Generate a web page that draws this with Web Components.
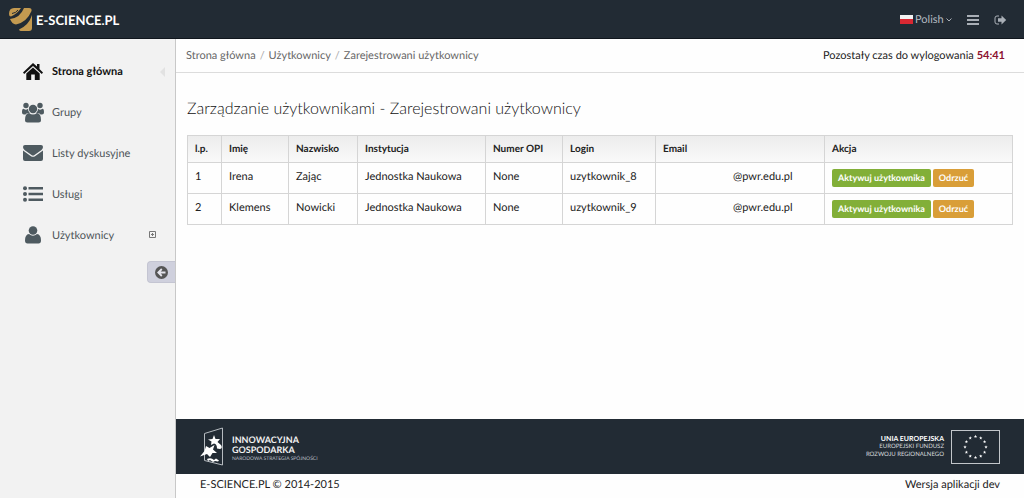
<!DOCTYPE html>
<html lang="pl">
<head>
<meta charset="utf-8">
<meta name="viewport" content="width=device-width, initial-scale=1">
<title>E-SCIENCE.PL – Zarejestrowani użytkownicy</title>
<style>
  body { margin: 0; font: 11px/16px Lato, "Open Sans", sans-serif; color: #222; background: #fefefe; text-rendering: geometricPrecision; }
</style>
</head>
<body>
<es-app>
  <es-topbar slot="top"></es-topbar>
  <es-sidebar slot="side">
    <es-nav-item icon="home" current>Strona główna</es-nav-item>
    <es-nav-item icon="group">Grupy</es-nav-item>
    <es-nav-item icon="mail">Listy dyskusyjne</es-nav-item>
    <es-nav-item icon="list">Usługi</es-nav-item>
    <es-nav-item icon="user" expandable>Użytkownicy</es-nav-item>
  </es-sidebar>
  <es-crumbs time="54:41"></es-crumbs>
  <es-users></es-users>
  <es-footer slot="foot"></es-footer>
</es-app>
<script>
const component = (name, markup, setup) => customElements.define(name, class extends HTMLElement {
  constructor() {
    super();
    const template = document.createElement('template');
    template.innerHTML = markup;
    this.attachShadow({ mode: 'open' }).append(template.content.cloneNode(true));
  }
  connectedCallback() { if (setup) setup(this, this.shadowRoot); }
});

component('es-app', `
<style>
  :host { display: flex; flex-direction: column; min-height: 100vh; }
  .body { flex: 1; display: grid; grid-template-columns: 176px minmax(0, 1fr); }
  .main { display: flex; flex-direction: column; }
  .content { flex: 1; }
</style>
<slot name="top"></slot>
<div class="body">
  <slot name="side"></slot>
  <div class="main"><main class="content"><slot></slot></main><slot name="foot"></slot></div>
</div>`);

component('es-topbar', `
<style>
  :host { display: block; background: #222b34; }
  header { display: flex; align-items: center; justify-content: space-between; height: 39px; padding: 0 17px 0 9px; box-shadow: inset 0 -1px #10161d; }
  .brand { display: flex; align-items: center; gap: 4px; color: #fff; font-size: 13px; font-weight: 700; text-decoration: none; }
  .tools { display: flex; align-items: center; gap: 15px; color: #a9afb6; }
  .lang { display: flex; align-items: center; gap: 2px; }
  svg { display: block; }
  select { appearance: none; border: 0; padding: 0; background: none; color: #b4bac1; font: inherit; text-rendering: inherit; }
  button { border: 0; padding: 0; background: none; color: inherit; }
</style>
<header>
  <a class="brand" href="#">
    <svg width="23" height="23" viewBox="0 0 23 23" aria-hidden="true">
      <g fill="#c49a50">
        <path d="M0 6Q0 0 5 0H12Q8 6 2 8.500Q0 8.500 0 6Z"/>
        <path d="M1 11Q11 10 15 0H20Q23 0 22.500 3Q18 14 7 16.500Q3 16 1 11Z"/>
        <path d="M10 21.500Q20 17 23 7V20Q23 23 20 23H12Q10.500 23 10 21.500Z"/>
      </g>
      <path d="M3 5.500Q7 5 9 2" fill="none" stroke="#222b34"/>
    </svg>
    <span>E-SCIENCE.PL</span>
  </a>
  <div class="tools">
    <label class="lang">
      <svg width="13" height="9" viewBox="0 0 13 9" aria-hidden="true"><path fill="#f2f2f2" d="M0 0h13v5H0z"/><path fill="#d92832" d="M0 4h13v5H0z"/></svg>
      <select aria-label="Język"><option>Polish</option></select>
      <svg width="6" height="4" viewBox="0 0 6 4" aria-hidden="true"><path d="M.5.5 3 3 5.500.5" fill="none" stroke="currentColor"/></svg>
    </label>
    <button aria-label="Menu"><svg width="12" height="10" viewBox="0 0 12 10"><path fill="currentColor" d="M0 0h12v2H0zM0 4h12v2H0zM0 8h12v2H0z"/></svg></button>
    <button aria-label="Wyloguj"><svg width="13" height="10" viewBox="0 0 13 10"><path d="M5 1H3Q1 1 1 3V7Q1 9 3 9H5" fill="none" stroke="currentColor"/><path fill="currentColor" d="M4 3.200H7.500V.6L12.200 5 7.500 9.400V6.800H4Z"/></svg></button>
  </div>
</header>`);

component('es-sidebar', `
<style>
  :host { display: block; background: #f2f2f2; border-right: 1px solid #c8c8c8; }
  nav { display: flex; flex-direction: column; padding-top: 12px; }
  .collapse { display: flex; align-items: center; justify-content: center; width: 28px; height: 22px; margin: 5px 0 0 auto; padding: 0; border: 1px solid #c4c5d2; border-right: 0; border-radius: 4px 0 0 4px; background: #cfd0dd; }
</style>
<nav><slot></slot></nav>
<button class="collapse" aria-label="Zwiń menu">
  <svg width="13" height="13" viewBox="0 0 13 13"><circle cx="6.500" cy="6.500" r="6.500" fill="#555"/><path d="M6.800 3 3.300 6.500 6.800 10M3.500 6.500H10.500" fill="none" stroke="#e4e4ec" stroke-width="1.800"/></svg>
</button>`);

const icons = {
  home: '<path d="M10 1 0 10.500 1.200 12 10 4 18.800 12 20 10.500 16.500 7V2H14V4.600Z"/><path d="M10 5.500 3.300 11.600V18H8.200V12.500H11.800V18H16.700V11.600Z"/>',
  group: '<circle cx="4" cy="3.500" r="2.700"/><circle cx="18" cy="3.500" r="2.700"/><path d="M2 7Q4 8.500 6 6.800Q6 10 8 11.200H5.500Q4.500 11.200 3.500 12.500H2Q0 12.500 0 10.500Q0 6 2 7ZM20 7Q18 8.500 16 6.800Q16 10 14 11.200H16.500Q17.500 11.200 18.500 12.500H20Q22 12.500 22 10.500Q22 6 20 7Z"/><circle cx="11" cy="7" r="4.200"/><path d="M7 11Q11 14 15 11Q19 11.500 19 18Q19 20.500 16.500 20.500H5.500Q3 20.500 3 18Q3 11.500 7 11Z"/>',
  mail: '<path d="M2 0H18Q20 0 20 2Q20 3.500 18.500 5L11.500 10Q10 11 8.500 10L1.500 5Q0 3.500 0 2Q0 0 2 0Z"/><path d="M0 5.500 8 11.200Q10 12.500 12 11.200L20 5.500V14Q20 16 18 16H2Q0 16 0 14Z"/>',
  list: '<circle cx="2" cy="2.200" r="2"/><circle cx="2" cy="8" r="2"/><circle cx="2" cy="13.800" r="2"/><path d="M5.500.9H20V3.500H5.500ZM5.500 6.700H20V9.300H5.500ZM5.500 12.500H20V15.100H5.500Z"/>',
  user: '<circle cx="8" cy="4.500" r="4.300"/><path d="M4 8Q8 11.500 12 8Q16 8.500 16 14.500Q16 17.500 13.500 17.500H2.500Q0 17.500 0 14.500Q0 8.500 4 8Z"/>'
};
const iconSizes = { home: [20, 18], group: [22, 21], mail: [20, 16], list: [20, 16], user: [16, 18] };

component('es-nav-item', `
<style>
  :host { display: block; color: #4d5458; }
  :host([current]) { color: #111; font-weight: 700; }
  a { display: flex; align-items: center; gap: 8px; height: 41px; padding: 0 10px 0 22px; box-sizing: border-box; color: inherit; text-decoration: none; }
  .icon { display: flex; justify-content: center; width: 22px; padding-bottom: 1px; color: #4e5a60; }
  :host([current]) .icon { color: #111; }
  .label { flex: 1; }
  .mark { display: none; }
  :host([expandable]) .plus { display: block; margin: 0 9px 3px 0; }
  :host([current]) .arrow { display: block; }
</style>
<a href="#">
  <span class="icon"></span><span class="label"><slot></slot></span>
  <svg class="mark plus" width="7" height="7" viewBox="0 0 7 7" aria-hidden="true"><path d="M.5.5H6.500V6.500H.5ZM2 3.500H5M3.500 2V5" fill="none" stroke="#777"/></svg>
  <svg class="mark arrow" width="5" height="10" viewBox="0 0 5 10" aria-hidden="true"><path d="M5 0V10L0 5Z" fill="#e2e2e2"/></svg>
</a>`, (host, root) => {
  const name = host.getAttribute('icon');
  const [w, h] = iconSizes[name];
  root.querySelector('.icon').innerHTML = `<svg width="${w}" height="${h}" viewBox="0 0 ${w} ${h}" fill="currentColor" aria-hidden="true">${icons[name]}</svg>`;
  if (host.hasAttribute('current')) root.querySelector('a').setAttribute('aria-current', 'page');
});

component('es-crumbs', `
<style>
  :host { display: flex; justify-content: space-between; align-items: center; height: 33px; padding: 0 19px 0 10px; border-bottom: 1px solid #dcdcdc; }
  ol { display: flex; margin: 0; padding: 0; list-style: none; }
  li + li::before { content: "/"; padding: 0 4px; color: #aaa; }
  a { color: #666; text-decoration: none; }
  strong { color: #8c1330; }
</style>
<nav aria-label="Ścieżka"><ol><li><a href="#">Strona główna</a></li><li><a href="#">Użytkownicy</a></li><li><a href="#">Zarejestrowani użytkownicy</a></li></ol></nav>
<div>Pozostały czas do wylogowania <strong></strong></div>`, (host, root) => {
  root.querySelector('strong').textContent = host.getAttribute('time');
});

component('es-users', `
<style>
  :host { display: block; padding: 24px 11px 20px; }
  h1 { margin: 0 0 14px; font-size: 16px; line-height: 24px; font-weight: 300; color: #111; }
  table { width: 100%; table-layout: fixed; border-collapse: collapse; border: 1px solid #d5d5d5; }
  th, td { box-sizing: border-box; border: 1px solid #d5d5d5; padding: 0 7px 1px; text-align: left; white-space: nowrap; }
  th { height: 27px; font-size: 10px; font-weight: 700; }
  td { height: 31px; padding-bottom: 3px; }
  thead tr { background: linear-gradient(#ececec, #fafafa); }
  .n { width: 34px; } .first { width: 67px; } .last { width: 69px; } .inst { width: 128px; }
  .opi { width: 77px; } .login { width: 93px; } .mail { width: 169px; }
  .masked { display: inline-block; width: 70px; }
  .actions { display: flex; gap: 2px; padding-top: 3px; }
  button { height: 18px; border: 0; border-radius: 2px; padding: 0 6px; color: #fff; font: inherit; text-rendering: inherit; font-weight: 700; font-size: 9px; line-height: 18px; }
  .ok { background: #82af38; } .no { background: #d99e38; }
</style>
<h1>Zarządzanie użytkownikami - Zarejestrowani użytkownicy</h1>
<table>
  <colgroup><col class="n"><col class="first"><col class="last"><col class="inst"><col class="opi"><col class="login"><col class="mail"><col></colgroup>
  <thead><tr><th scope="col">l.p.</th><th scope="col">Imię</th><th scope="col">Nazwisko</th><th scope="col">Instytucja</th><th scope="col">Numer OPI</th><th scope="col">Login</th><th scope="col">Email</th><th scope="col">Akcja</th></tr></thead>
  <tbody></tbody>
</table>`, (host, root) => {
  const users = [
    ['1', 'Irena', 'Zając', 'Jednostka Naukowa', 'None', 'uzytkownik_8'],
    ['2', 'Klemens', 'Nowicki', 'Jednostka Naukowa', 'None', 'uzytkownik_9']
  ];
  root.querySelector('tbody').innerHTML = users.map(u => `<tr>${u.map(v => `<td>${v}</td>`).join('')}<td><span class="masked"></span>@pwr.edu.pl</td><td><div class="actions"><button class="ok">Aktywuj użytkownika</button><button class="no">Odrzuć</button></div></td></tr>`).join('');
});

component('es-footer', `
<style>
  :host { display: block; }
  .band { display: flex; justify-content: space-between; align-items: center; height: 55px; padding: 0 24px; background: #222b34; color: #f2f2f2; }
  .logo { display: flex; align-items: center; gap: 7px; }
  .left { font-size: 9px; line-height: 10px; font-weight: 700; }
  .left span { display: block; }
  .left small { display: block; font-size: 5px; font-weight: 400; line-height: 8px; color: #b9bec3; }
  .left div { padding-top: 5px; }
  .right { font-size: 6px; line-height: 8px; text-align: right; color: #d5d8db; }
  .right span, .right b { display: block; }
  .right b { color: #fff; font-size: 7px; }
  .legal { display: flex; justify-content: space-between; align-items: center; height: 22px; padding: 0 24px 2px; }
  svg { display: block; }
</style>
<footer>
  <div class="band">
    <div class="logo left">
      <svg width="25" height="40" viewBox="0 0 25 40" aria-hidden="true">
        <path d="M4.500 6.500 22.500 1V38L4.500 33.500Z" fill="none" stroke="#b6bbc0"/>
        <g fill="#fff">
          <path d="M14 8 15.500 12 20 12 17.500 15 21 18Q23 21 20 22L17 21.500Q17 17 14 16.500L11 18 11.500 14.500 8 12.500 12.500 12Z"/>
          <path d="M6 19 9.500 21 14.500 18 13 22.500 17 26 12.500 26 10 30 7 27 0 29.500 4.500 24Z"/>
          <path d="M7 32Q11 30 14 33L16 31.500 19 33.500 18 34.500 15 34 13 35 10 33 8 34Z"/>
        </g>
      </svg>
      <div><span>INNOWACYJNA</span><span>GOSPODARKA</span><small>NARODOWA STRATEGIA SPÓJNOŚCI</small></div>
    </div>
    <div class="logo right">
      <div><b>UNIA EUROPEJSKA</b><span>EUROPEJSKI FUNDUSZ</span><span>ROZWOJU REGIONALNEGO</span></div>
      <svg width="49" height="34" viewBox="0 0 49 34" role="img" aria-label="Unia Europejska"><rect x=".5" y=".5" width="48" height="33" fill="none" stroke="#c2c6ca"/><g class="stars" fill="#fff"></g></svg>
    </div>
  </div>
  <div class="legal"><span>E-SCIENCE.PL © 2014-2015</span><span>Wersja aplikacji dev</span></div>
</footer>`, (host, root) => {
  const star = 'M0-1.700.5-.5 1.700-.5.7.3 1 1.500 0 .8-1 1.500-.7.3-1.700-.5-.5-.5Z';
  root.querySelector('.stars').innerHTML = Array.from({ length: 12 }, (_, i) => {
    const a = i * Math.PI / 6;
    return `<path transform="translate(${(24.5 + 10.5 * Math.sin(a)).toFixed(2)} ${(17 - 10.5 * Math.cos(a)).toFixed(2)})" d="${star}"/>`;
  }).join('');
});
</script>
</body>
</html>
